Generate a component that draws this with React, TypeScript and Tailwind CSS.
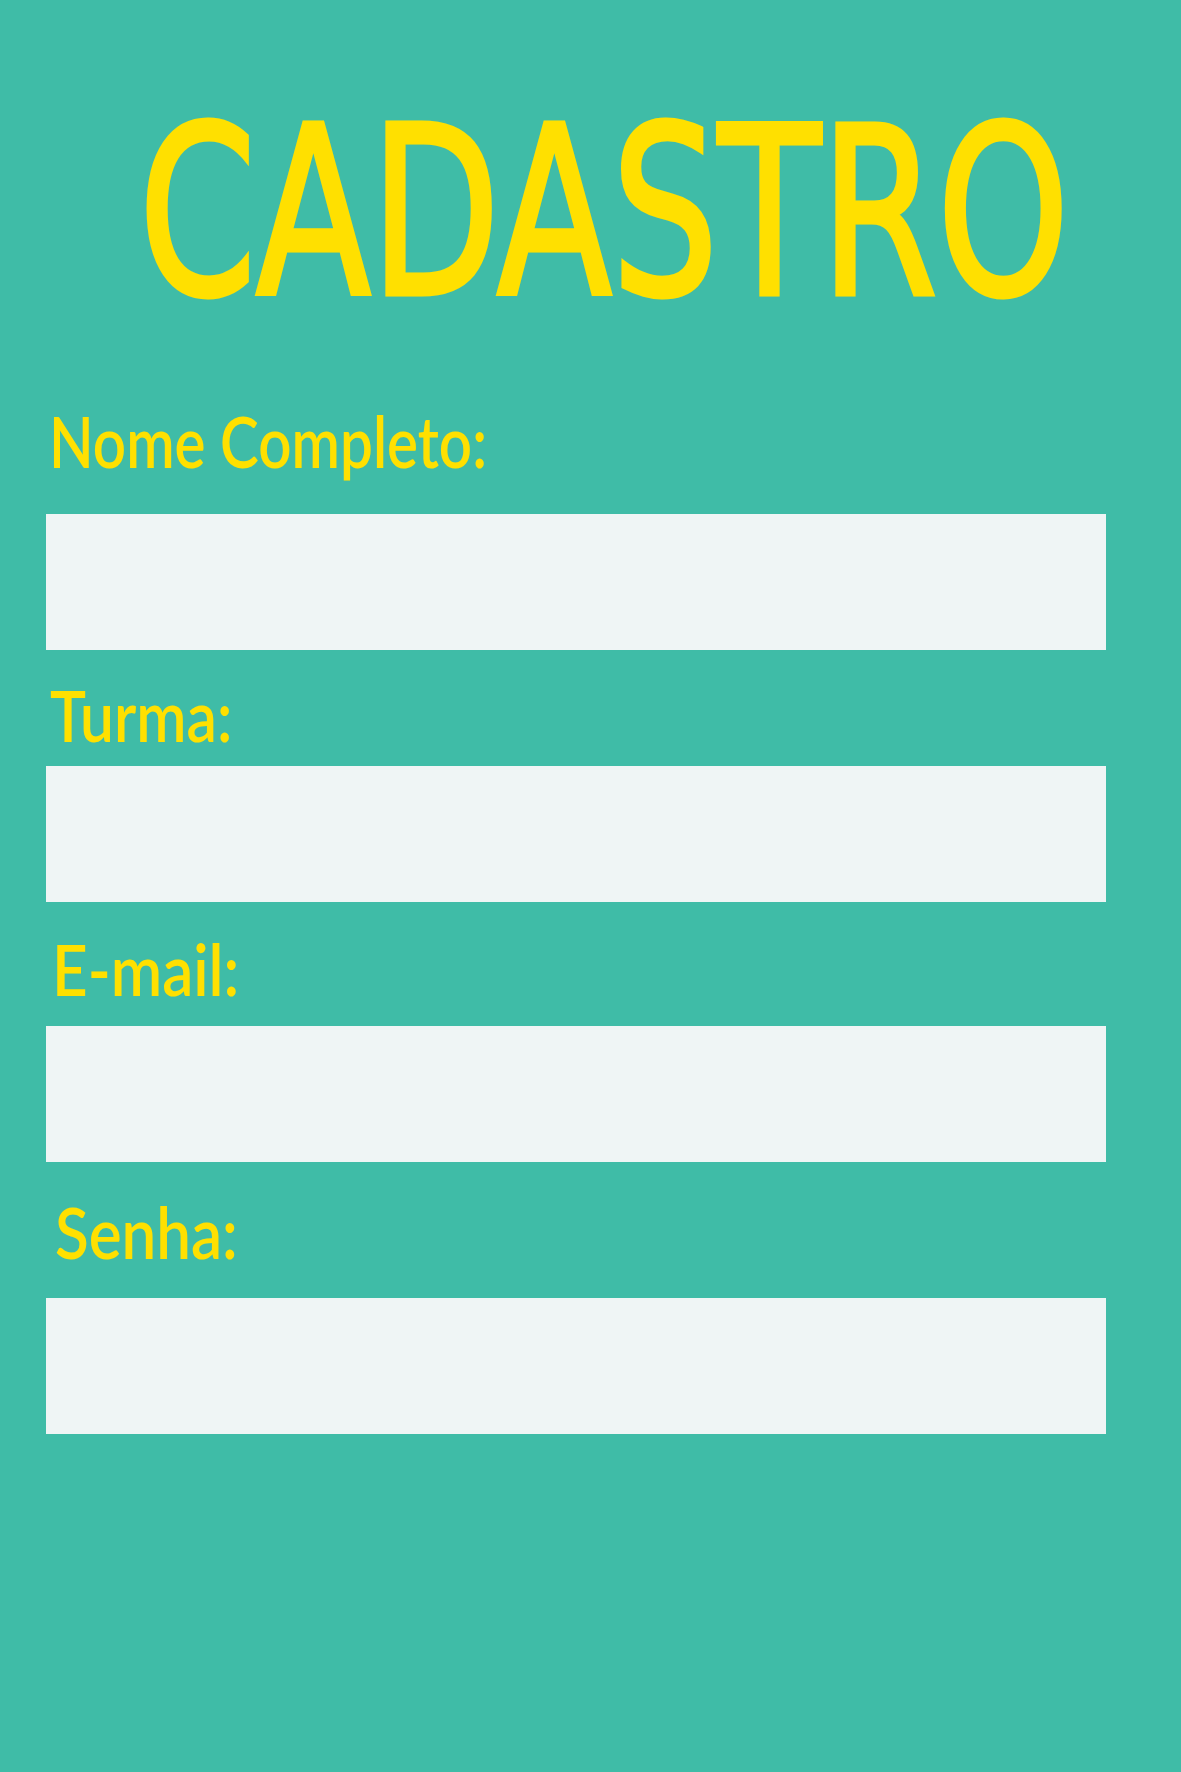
import React from 'react';

const labelFont = { fontFamily: 'Lato, "Open Sans", sans-serif' };

export default function App() {
  return (
    <div className="min-h-[1772px] w-full overflow-hidden bg-[#3fbca7]">
      <h1
        className="flex justify-center pt-[97px] h-[330px] text-[233px] leading-none text-[#ffe000]"
        style={{ fontFamily: '"DejaVu Sans", sans-serif' }}
      >
        <span className="inline-block shrink-0 ml-[28px] scale-x-[0.72] [-webkit-text-stroke:5px_#ffe000]">CADASTRO</span>
      </h1>

      <form className="pl-[46px] w-[1106px]" onSubmit={(e) => e.preventDefault()}>
        <label htmlFor="nome" className="block mt-[74px] h-[72px] pl-[3px] text-[72px] font-semibold leading-none text-[#ffe000]" style={labelFont}>
          <span className="inline-block origin-left scale-x-[0.81]">Nome Completo:</span>
        </label>
        <input id="nome" type="text" className="block mt-[38px] h-[136px] w-full bg-[#eff5f5] outline-none" />

        <label htmlFor="turma" className="block mt-[28px] h-[72px] pl-[4px] text-[72px] font-semibold leading-none text-[#ffe000]" style={labelFont}>
          <span className="inline-block origin-left scale-x-[0.84]">Turma:</span>
        </label>
        <input id="turma" type="text" className="block mt-[16px] h-[136px] w-full bg-[#eff5f5] outline-none" />

        <label htmlFor="email" className="block mt-[30px] h-[72px] pl-[6px] text-[72px] font-semibold leading-none text-[#ffe000]" style={labelFont}>
          <span className="inline-block origin-left scale-x-[0.86]">E-mail:</span>
        </label>
        <input id="email" type="email" className="block mt-[22px] h-[136px] w-full bg-[#eff5f5] outline-none" />

        <label htmlFor="senha" className="block mt-[33px] h-[72px] pl-[9px] text-[72px] font-semibold leading-none text-[#ffe000]" style={labelFont}>
          <span className="inline-block origin-left scale-x-[0.86]">Senha:</span>
        </label>
        <input id="senha" type="password" className="block mt-[31px] h-[136px] w-full bg-[#eff5f5] outline-none" />
      </form>
    </div>
  );
}
